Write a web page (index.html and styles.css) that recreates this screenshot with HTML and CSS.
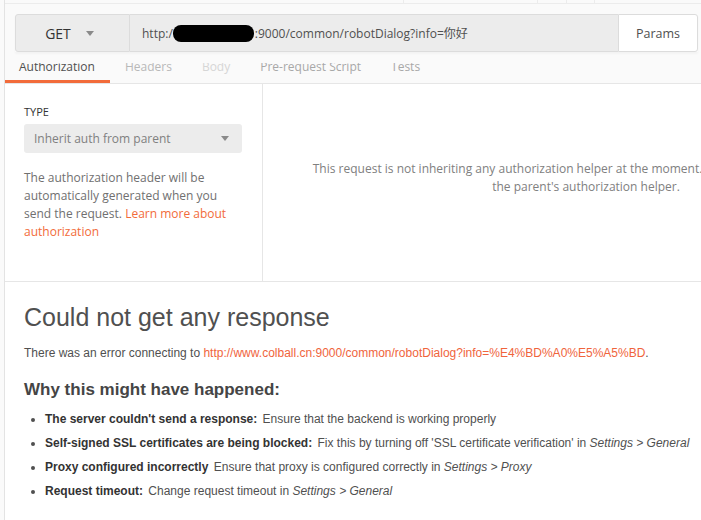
FILE: index.html
```html
<!DOCTYPE html>
<html>
<head>
<meta charset="utf-8">
<link rel="stylesheet" href="styles.css">
</head>
<body>
<div class="app">
  <div class="header">
    <div class="topstrip">
      <span class="tick t1"></span><span class="tick t2"></span><span class="tick t3"></span><span class="tick t4"></span>
    </div>
    <div class="reqbar">
      <div class="method"><span>GET</span><span class="caret"></span></div>
      <div class="url">http:/<span class="redact"></span>:9000/common/robotDialog?info=你好</div>
      <div class="params">Params</div>
    </div>
  </div>
  <div class="tabs">
    <div class="tab active">Authorization</div>
    <div class="tab t-headers">Headers</div>
    <div class="tab t-body">Body</div>
    <div class="tab t-pre">Pre-request Script</div>
    <div class="tab t-pre">Tests</div>
  </div>
  <div class="auth">
    <div class="auth-left">
      <div class="type-label">TYPE</div>
      <div class="select"><span>Inherit auth from parent</span><span class="caret"></span></div>
      <p class="desc">The authorization header will be automatically generated when you send the request. <span class="link">Learn more about authorization</span></p>
    </div>
    <div class="auth-right">
      <p class="inherit">This request is not inheriting any authorization helper at the moment. Save it in a collection to use<br>the parent's authorization helper.</p>
    </div>
  </div>
  <div class="response">
    <h1 class="resp-title">Could not get any response</h1>
    <p class="resp-error">There was an error connecting to <span class="link">http://www.colball.cn:9000/common/robotDialog?info=%E4%BD%A0%E5%A5%BD</span>.</p>
    <h2 class="resp-why">Why this might have happened:</h2>
    <ul class="reasons">
      <li><b>The server couldn't send a response:</b> Ensure that the backend is working properly</li>
      <li><b>Self-signed SSL certificates are being blocked:</b> Fix this by turning off 'SSL certificate verification' in <i>Settings &gt; General</i></li>
      <li><b>Proxy configured incorrectly</b> Ensure that proxy is configured correctly in <i>Settings &gt; Proxy</i></li>
      <li><b>Request timeout:</b> Change request timeout in <i>Settings &gt; General</i></li>
    </ul>
  </div>
</div>
</body>
</html>
```
FILE: styles.css
```css
html, body {
  margin: 0;
  padding: 0;
  background: #fafafa;
}
body {
  width: 701px;
  height: 520px;
  overflow: hidden;
  font-family: "Open Sans", "Noto Sans CJK SC", sans-serif;
}
.app {
  margin-left: 4px;
  border-left: 1px solid #e3e3e3;
  height: 520px;
  background: #fff;
}
.header {
  position: relative;
  z-index: 2;
  height: 63px;
  background: #fafafa;
}
.topstrip {
  position: relative;
  height: 3px;
  border-bottom: 1px solid #ececec;
}
.tick {
  position: absolute;
  top: 0;
  width: 1px;
  height: 4px;
  background: #ececec;
}
.t1 { left: 398px; }
.t2 { left: 532px; }
.t3 { left: 561px; }
.t4 { left: 589px; }
.reqbar {
  display: flex;
  height: 38px;
  margin: 10px 3px 0 10px;
  box-shadow: 0 2px 2px rgba(0,0,0,0.03);
}
.method {
  width: 115px;
  box-sizing: border-box;
  display: flex;
  align-items: center;
  justify-content: center;
  gap: 15px;
  background: #ececec;
  border: 1px solid #dcdcdc;
  border-radius: 3px 0 0 3px;
  font-size: 14px;
  color: #333;
  padding-right: 6px;
}
.caret {
  width: 0;
  height: 0;
  border-left: 4px solid transparent;
  border-right: 4px solid transparent;
  border-top: 5px solid #8a8a8a;
}
.url {
  flex: 1;
  display: flex;
  align-items: center;
  background: #ececec;
  border-top: 1px solid #dcdcdc;
  border-bottom: 1px solid #dcdcdc;
  padding-left: 12px;
  font-size: 12px;
  color: #505050;
  white-space: nowrap;
}
.redact {
  display: inline-block;
  width: 81px;
  height: 17px;
  background: #000;
  border-radius: 8px;
  margin-left: 0;
  margin-right: 1px;
}
.params {
  width: 80px;
  box-sizing: border-box;
  display: flex;
  align-items: center;
  justify-content: center;
  background: #fff;
  border: 1px solid #dcdcdc;
  border-radius: 0 3px 3px 0;
  font-size: 12.5px;
  color: #505050;
}
.tabs {
  display: flex;
  height: 26px;
  margin-top: -6px;
  background: #fafafa;
  border-bottom: 1px solid #e6e6e6;
  font-size: 12px;
  overflow: hidden;
}
.tab {
  padding: 0 15px 0 14px;
  line-height: 19px;
  height: 23px;
  color: #a6a6a6;
}
.tab + .tab { padding-left: 15px; }
.tab.active {
  color: #505050;
  border-bottom: 3px solid #f26b3a;
}
.t-headers { color: #b8b8b8; }
.t-body { color: #d6d6d6; }
.t-pre { color: #a8a8a8; }
.auth {
  display: flex;
  height: 197px;
  border-bottom: 1px solid #e6e6e6;
}
.auth-left {
  width: 258px;
  flex: none;
  border-right: 1px solid #e6e6e6;
  padding: 21px 0 0 19px;
  box-sizing: border-box;
}
.type-label {
  font-size: 11px;
  line-height: 14px;
  color: #333;
}
.select {
  margin-top: 5px;
  width: 218px;
  height: 29px;
  box-sizing: border-box;
  background: #ececec;
  border-radius: 3px;
  display: flex;
  align-items: center;
  justify-content: space-between;
  padding: 0 13px 0 10px;
  font-size: 12px;
  color: #808080;
}
.desc {
  margin: 16px 0 0 0;
  width: 215px;
  font-size: 12px;
  line-height: 18px;
  color: #707070;
}
.link { color: #f26b3a; }
.auth-right {
  flex: none;
  width: 646px;
}
.inherit {
  margin: 76px 0 0 0;
  text-align: center;
  font-size: 12px;
  line-height: 18px;
  color: #808080;
  white-space: nowrap;
}
.response {
  padding: 20px 0 0 19px;
  font-family: "Liberation Sans", Arial, sans-serif;
  color: #505050;
}
.resp-title {
  margin: 0;
  font-size: 25px;
  line-height: 30px;
  font-weight: normal;
}
.resp-error {
  margin: 13px 0 0 0;
  font-size: 12px;
  line-height: 16px;
}
.resp-error .link { color: #f0643c; }
.resp-why {
  margin: 19px 0 0 0;
  font-size: 17px;
  line-height: 20px;
  font-weight: bold;
  color: #454545;
}
.reasons {
  margin: 7px 0 0 0;
  padding-left: 21px;
  font-size: 12px;
  line-height: 24px;
}
.reasons b { color: #333; margin-right: 2px; }
```
